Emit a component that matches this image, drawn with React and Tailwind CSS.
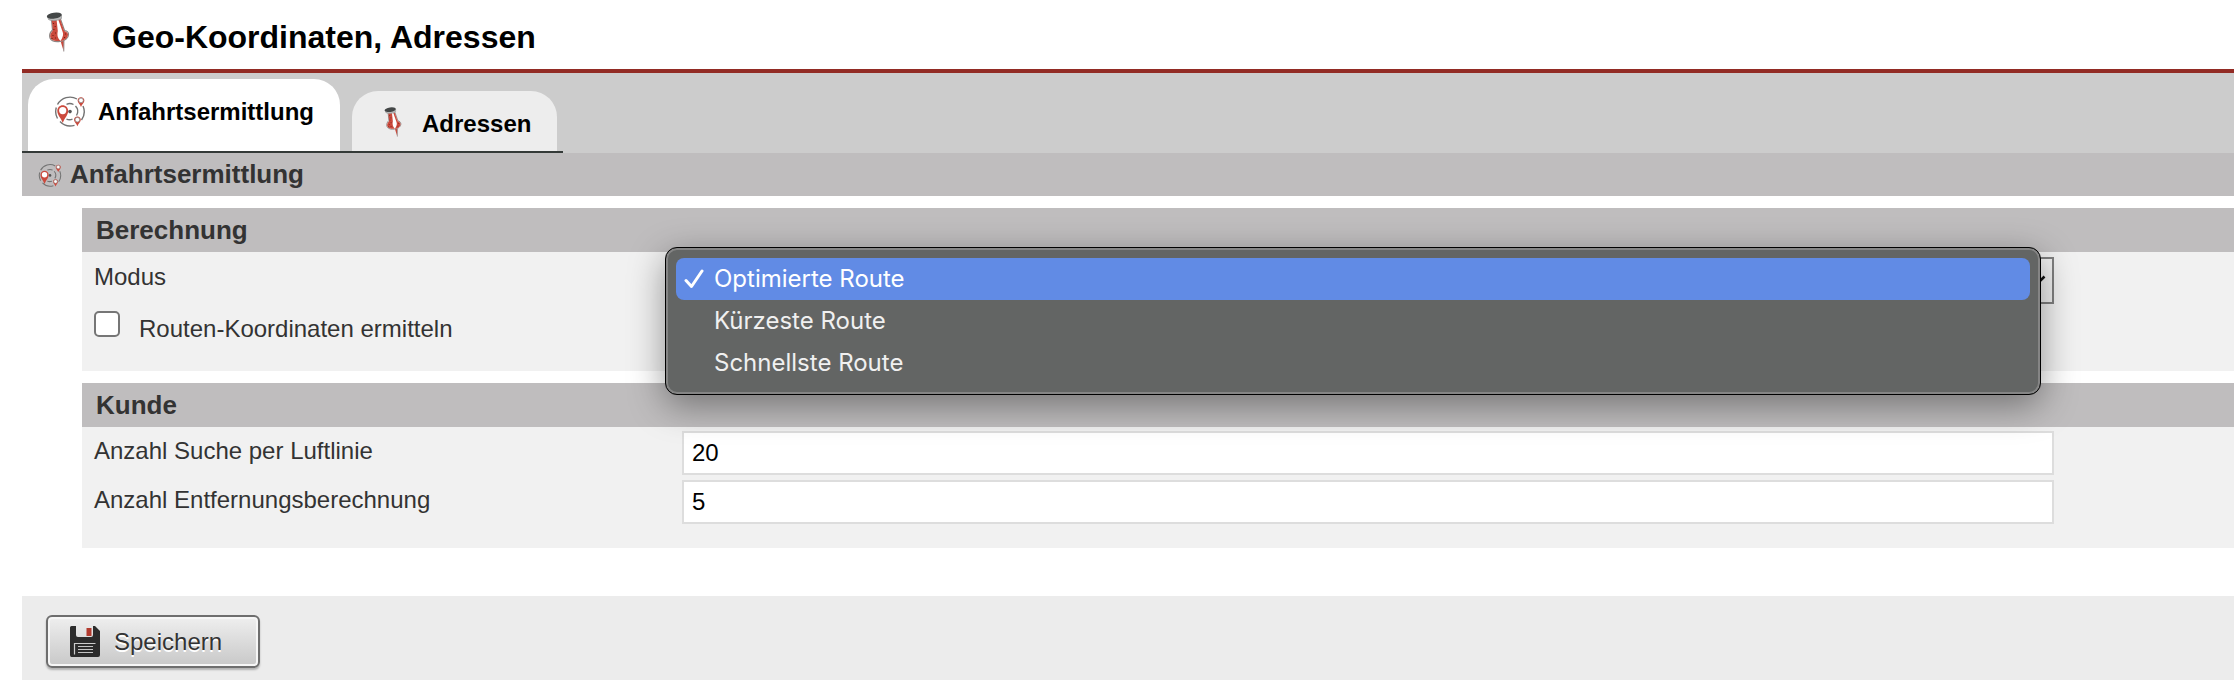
import React from "react";

const PinIcon = ({ className }) => (
  <svg viewBox="0 0 24 40" className={className} aria-hidden="true">
    <path d="M14.500 29 L17.800 39.500 L18 28.500 Z" fill="#c8493c" />
    <path d="M18 28.500 L17.800 39.500" stroke="#999" strokeWidth="1" />
    <path
      d="M5.500 7.500 L6.500 18 C4 20.500 3 23 4 26 C5.500 29.500 10 30 14 29.500 C19 29 22.500 26 22.500 22.500 C22.500 20 20.500 18.800 18.500 18.500 L14.500 7 Z"
      fill="#fff"
      stroke="#8d8583"
      strokeWidth="1.200"
    />
    <path
      d="M5.700 8 L6.900 18.500 C4.500 21 3.600 23.500 4.600 26 C6 28.800 10 29.300 14.500 29 C11.500 26 11 23 11.800 19 L10.600 8 Z"
      fill="#cb4a3d"
    />
    <path
      d="M12.300 7.800 L16.500 19.500 C17.800 22 17 25 14.500 29 C19 28.500 22 25.500 22 22.500 C22 20.500 20 19.500 18.200 19 L14.300 7.500 Z"
      fill="#cb4a3d"
    />
    <path
      d="M7.500 11 v1 M9.200 14 v1 M7.900 17 v1 M9.500 20.500 v1 M7 23 v1 M6 26 v1 M9.500 25.500 v1 M19.500 21.500 v1 M18.500 25 v1"
      stroke="#6e2019"
      strokeWidth="1.100"
    />
    <path d="M1.500 4.500 L2.500 7.500 C6 9.500 12 8.800 15.500 6.500 L15.500 3 Z" fill="#b9b9b9" stroke="#8a8a8a" strokeWidth="0.600" />
    <ellipse cx="8.300" cy="3.600" rx="7.500" ry="3" fill="#434646" transform="rotate(-8 8.300 3.600)" />
  </svg>
);

const RouteIcon = ({ className }) => (
  <svg viewBox="0 0 32 32" className={className} fill="none" aria-hidden="true">
    <g stroke="#737373" strokeWidth="1.400">
      <path d="M3.500 9.500 A14.300 14.300 0 0 1 23 4" />
      <path d="M29 11 A14.300 14.300 0 0 1 27.500 25" />
      <path d="M20.500 30.300 A14.300 14.300 0 0 1 6 26.500" />
      <path d="M3.500 23.500 A14.300 14.300 0 0 1 2.300 12.500" />
      <path d="M12.500 9.300 A8 8 0 0 1 19.500 9.500" />
      <path d="M21.500 11 A8 8 0 0 1 22.500 20.500" />
      <path d="M18.500 24.200 A8 8 0 0 1 12.500 24.200" />
    </g>
    <circle cx="16" cy="16.600" r="1.800" fill="#555" />
    <path
      d="M3.300 16 C3.300 12.500 5.700 10.200 8.700 10.200 C11.700 10.200 14.200 12.500 14.200 16 C14.200 20 10.500 23 8.800 28 C7 23 3.300 20 3.300 16 Z"
      fill="#cb4a3d"
    />
    <circle cx="8.700" cy="15.600" r="3.600" fill="#fff" />
    <path
      d="M23.600 5.500 C23.600 3.700 25 2.300 27 2.300 C29 2.300 30.400 3.700 30.400 5.500 C30.400 7.500 28 9 27 12 C26 9 23.600 7.500 23.600 5.500 Z"
      fill="#cb4a3d"
    />
    <circle cx="27" cy="5.400" r="2.300" fill="#fff" stroke="#888" strokeWidth="0.700" />
    <path
      d="M20 24.800 C20 23 21.400 21.600 23.400 21.600 C25.400 21.600 26.800 23 26.800 24.800 C26.800 26.800 24.400 28.300 23.400 31.300 C22.400 28.300 20 26.800 20 24.800 Z"
      fill="#cb4a3d"
    />
    <circle cx="23.400" cy="24.700" r="2.300" fill="#fff" stroke="#888" strokeWidth="0.700" />
  </svg>
);

const SaveIcon = ({ className }) => (
  <svg viewBox="0 0 30 31" className={className} aria-hidden="true">
    <path
      d="M1.500 0 H6 V9 Q6 11 8 11 H21 Q23 11 23 9 V0 H25 L30 5 V29 Q30 31 28 31 H1.500 Q0 31 0 29 V1.500 Q0 0 1.500 0 Z"
      fill="#2c2c2c"
    />
    <rect x="16.500" y="2" width="5" height="8" fill="#b23a2e" />
    <path d="M4.500 28.500 V17.500 H25.500" fill="none" stroke="#ccc" strokeWidth="1.200" />
    <path d="M8 20.500 H23 M8 23.500 H23 M8 26.500 H23" stroke="#c4c4c4" strokeWidth="1.200" />
  </svg>
);

const modes = ["Optimierte Route", "Kürzeste Route", "Schnellste Route"];

const customerFields = [
  { id: "luftlinie", label: "Anzahl Suche per Luftlinie", value: "20" },
  { id: "entfernung", label: "Anzahl Entfernungsberechnung", value: "5" },
];

const Section = ({ title, children }) => (
  <section className="bg-[#f1f1f1]">
    <h3 className="bg-[#bfbdbe] h-11 px-3.5 text-[26px] leading-[44px] font-bold">{title}</h3>
    {children}
  </section>
);

const App = () => {
  return (
    <div className="pl-[22px] pb-2 bg-white text-[#333] text-2xl font-['Liberation_Sans',Arial,sans-serif]">
      <header className="flex items-start h-[73px] border-b-4 border-[#922b24]">
        <PinIcon className="w-6 h-10 mt-3 ml-6" />
        <h1 className="ml-[42px] mt-[18px] text-[32px] leading-[38px] font-bold text-black">
          Geo-Koordinaten, Adressen
        </h1>
      </header>

      {/* Tabs */}
      <nav className="flex bg-[#ccc]">
        <div className="flex items-end gap-3 h-20 px-1.5 border-b-2 border-[#343a38] font-bold text-black">
          <a href="#anfahrt" className="flex h-[72px] px-[26px] rounded-t-[26px] bg-white">
            <RouteIcon className="w-8 h-8 mt-4" />
            <span className="ml-3 mt-[19px] leading-7">Anfahrtsermittlung</span>
          </a>
          <a href="#adressen" className="flex h-[60px] pl-8 pr-[26px] rounded-t-[26px] bg-[#ededed]">
            <PinIcon className="w-[18px] h-[30px] mt-4" />
            <span className="ml-5 mt-[19px] leading-7">Adressen</span>
          </a>
        </div>
      </nav>

      <h2 className="flex items-center h-[43px] pl-4 bg-[#bfbdbe] text-[26px] font-bold">
        <RouteIcon className="w-6 h-6" />
        <span className="ml-2">Anfahrtsermittlung</span>
      </h2>

      <form>
        <div className="flex flex-col gap-3 pt-3 pl-[60px]">
          <Section title="Berechnung">
            <div className="pt-[5px] pb-7 pl-3 pr-[180px]">
              <div className="flex items-start">
                <label htmlFor="modus" className="w-[588px] pt-1.5 leading-7">Modus</label>
                <div className="relative flex-1">
                  <select
                    id="modus"
                    className="block w-full h-[47px] px-2 border-2 border-[#808080] bg-[#f1f1f1] appearance-none"
                  >
                    {modes.map((mode) => (
                      <option key={mode}>{mode}</option>
                    ))}
                  </select>
                  <svg viewBox="0 0 16 10" className="absolute right-2 top-[18px] w-4 h-2.5" fill="none">
                    <path d="M1.500 1.500 L8 8 L14.500 1.500" stroke="#111" strokeWidth="2.500" />
                  </svg>

                  <ul
                    role="listbox"
                    aria-label="Modus"
                    className="absolute z-10 -top-2.5 -left-[17px] right-[13px] px-2.5 py-2.5 rounded-xl border border-black bg-[#636564] text-[#f0f0f0] font-['Inter',sans-serif] ring-2 ring-inset ring-[#858585] shadow-[0_10px_36px_rgba(0,0,0,0.4)]"
                  >
                    {modes.map((mode, index) => (
                      <li
                        key={mode}
                        role="option"
                        aria-selected={index === 0}
                        className="flex items-center h-[42px] px-2 rounded-lg aria-selected:bg-[#618be5] aria-selected:text-white"
                      >
                        <span className="w-[30px]">
                          {index === 0 && (
                            <svg viewBox="0 0 20 20" className="w-5 h-5" fill="none">
                              <path
                                d="M2 11.500 L7.500 17.500 L18 2"
                                stroke="#fff"
                                strokeWidth="3"
                                strokeLinecap="round"
                                strokeLinejoin="round"
                              />
                            </svg>
                          )}
                        </span>
                        {mode}
                      </li>
                    ))}
                  </ul>
                </div>
              </div>
              <label className="flex items-start mt-[7px]">
                <input
                  type="checkbox"
                  className="w-[26px] h-[26px] appearance-none rounded-[5px] border-2 border-[#767676] bg-white"
                />
                <span className="ml-[19px] mt-1 leading-7">Routen-Koordinaten ermitteln</span>
              </label>
            </div>
          </Section>

          <Section title="Kunde">
            <div className="flex flex-col gap-[5px] pt-1 pb-6 pl-3 pr-[180px]">
              {customerFields.map((field) => (
                <div key={field.id} className="flex items-start">
                  <label htmlFor={field.id} className="w-[588px] pt-1.5 leading-7">{field.label}</label>
                  <input
                    id={field.id}
                    type="text"
                    defaultValue={field.value}
                    className="flex-1 h-11 px-2 border-2 border-[#ddd] bg-white text-black"
                  />
                </div>
              ))}
            </div>
          </Section>
        </div>

        <footer className="flex items-start h-[84px] mt-12 pt-[19px] pl-6 bg-[#ececec]">
          <button
            type="button"
            className="flex items-center h-[53px] pl-[22px] pr-9 rounded-md border-2 border-[#6e6e6e] bg-linear-to-b from-[#efefef] to-[#c8c8c8] inset-ring-2 inset-ring-[#f6f6f6] shadow-[0_2px_2px_rgba(0,0,0,0.25)] text-shadow-[0_2px_0_#fff]"
          >
            <SaveIcon className="w-[30px] h-[31px]" />
            <span className="ml-3.5">Speichern</span>
          </button>
        </footer>
      </form>
    </div>
  );
};

export default App;
